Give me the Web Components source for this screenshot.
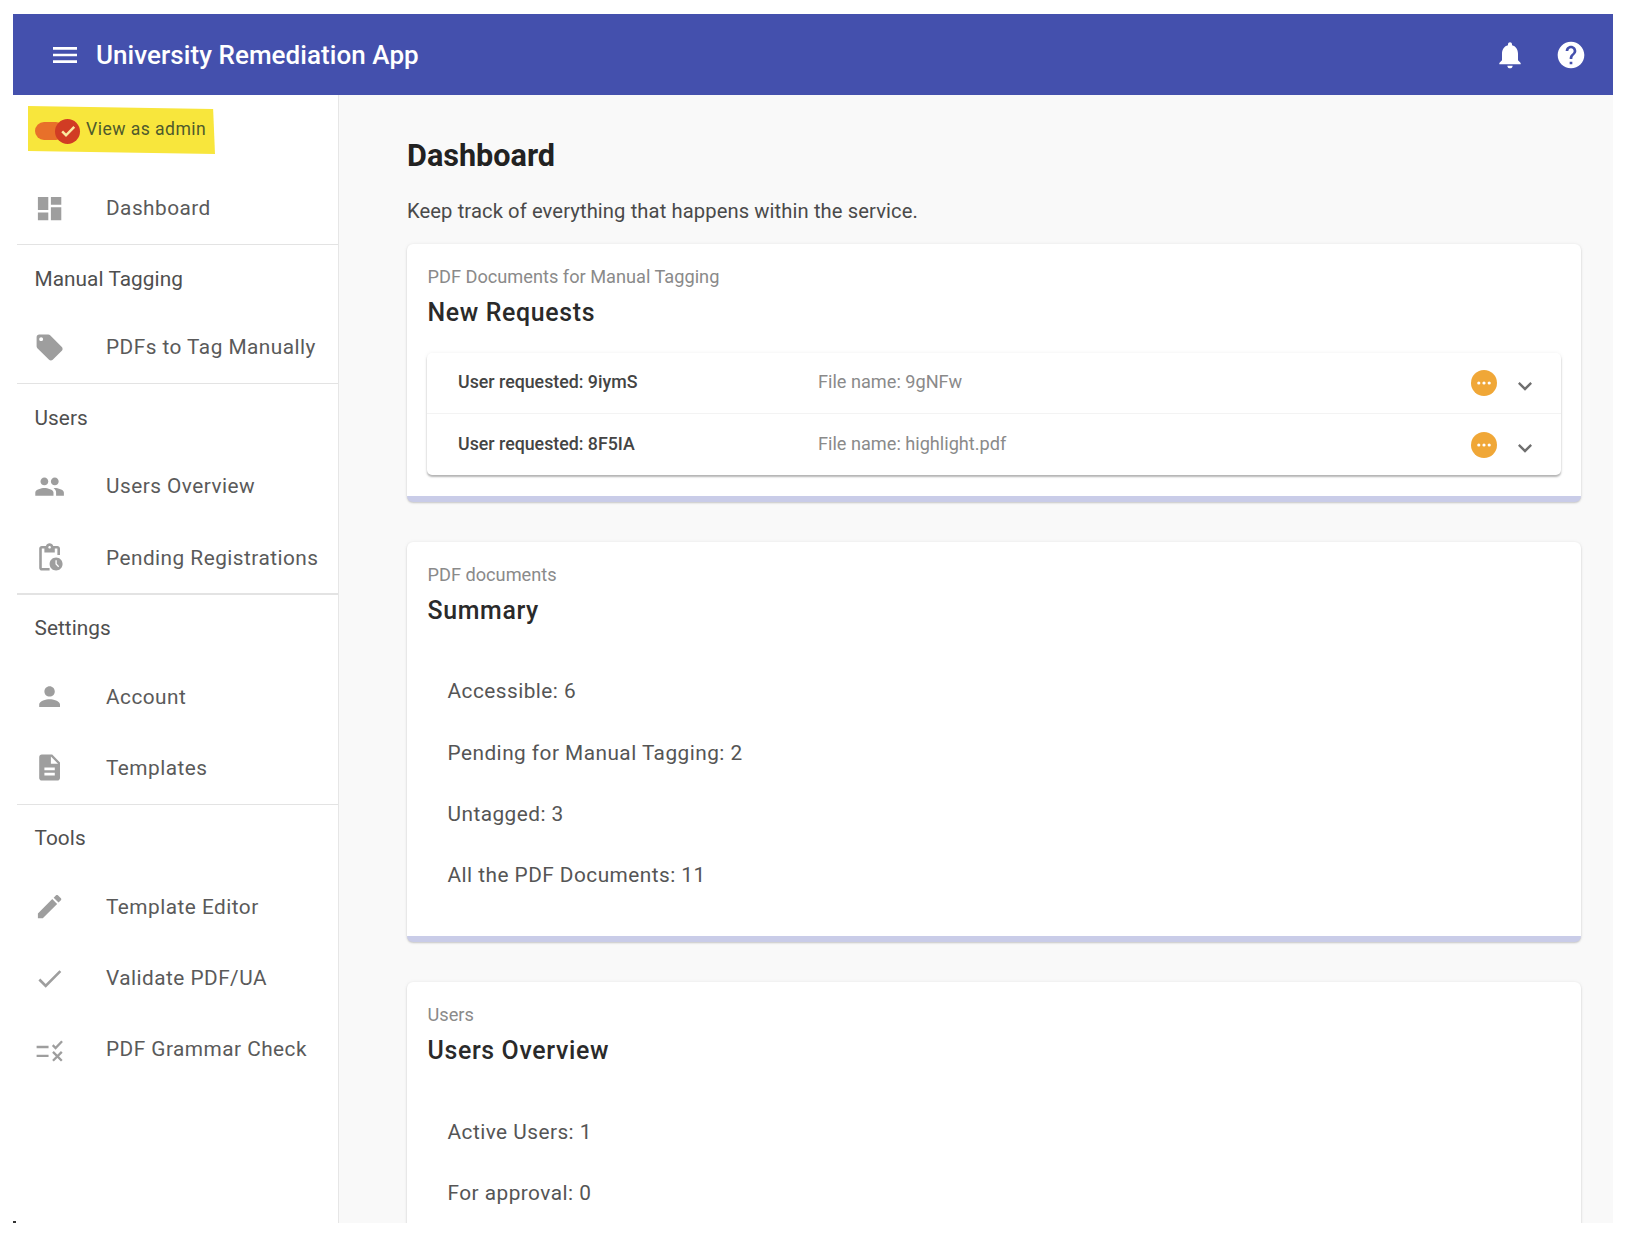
<!DOCTYPE html>
<html lang="en">
<head>
<meta charset="utf-8">
<title>University Remediation App</title>
<style>
html,body{margin:0;padding:0;background:#fff;overflow:hidden}
body{font-family:Roboto,"Liberation Sans",sans-serif;padding:14px 19px 0 13px;height:1226px}
</style>
</head>
<body>
<app-shell>
  <app-bar slot="bar">University Remediation App</app-bar>
  <side-nav slot="nav">
    <admin-toggle>View as admin</admin-toggle>
    <nav-item icon="dashboard">Dashboard</nav-item>
    <nav-divider></nav-divider>
    <nav-head>Manual Tagging</nav-head>
    <nav-item icon="tag">PDFs to Tag Manually</nav-item>
    <nav-divider></nav-divider>
    <nav-head>Users</nav-head>
    <nav-item icon="people">Users Overview</nav-item>
    <nav-item icon="pending">Pending Registrations</nav-item>
    <nav-divider></nav-divider>
    <nav-head>Settings</nav-head>
    <nav-item icon="person">Account</nav-item>
    <nav-item icon="doc">Templates</nav-item>
    <nav-divider></nav-divider>
    <nav-head>Tools</nav-head>
    <nav-item icon="edit">Template Editor</nav-item>
    <nav-item icon="check">Validate PDF/UA</nav-item>
    <nav-item icon="rule">PDF Grammar Check</nav-item>
  </side-nav>
  <dash-page slot="main" heading="Dashboard" intro="Keep track of everything that happens within the service.">
    <dash-card label="PDF Documents for Manual Tagging" heading="New Requests">
      <request-list>
        <request-row user="User requested: 9iymS" file="File name: 9gNFw"></request-row>
        <request-row user="User requested: 8F5IA" file="File name: highlight.pdf"></request-row>
      </request-list>
    </dash-card>
    <dash-card label="PDF documents" heading="Summary">
      <stat-line>Accessible: 6</stat-line>
      <stat-line>Pending for Manual Tagging: 2</stat-line>
      <stat-line>Untagged: 3</stat-line>
      <stat-line>All the PDF Documents: 11</stat-line>
    </dash-card>
    <dash-card label="Users" heading="Users Overview">
      <stat-line>Active Users: 1</stat-line>
      <stat-line>For approval: 0</stat-line>
    </dash-card>
  </dash-page>
</app-shell>
<script>
const ICONS={
  menu:'<path d="M3 18h18v-2H3v2zm0-5h18v-2H3v2zm0-7v2h18V6H3z"/>',
  bell:'<path d="M12 22c1.1 0 2-.9 2-2h-4c0 1.1.89 2 2 2zm6-6v-5c0-3.07-1.64-5.64-4.5-6.32V4c0-.83-.67-1.5-1.5-1.5s-1.5.67-1.5 1.5v.68C7.63 5.36 6 7.92 6 11v5l-2 2v1h16v-1l-2-2z"/>',
  help:'<path d="M12 2C6.48 2 2 6.48 2 12s4.48 10 10 10 10-4.48 10-10S17.52 2 12 2zm1 17h-2v-2h2v2zm2.07-7.75l-.9.92C13.45 12.9 13 13.5 13 15h-2v-.5c0-1.1.45-2.1 1.17-2.83l1.24-1.26c.37-.36.59-.86.59-1.41 0-1.1-.9-2-2-2s-2 .9-2 2H8c0-2.21 1.79-4 4-4s4 1.79 4 4c0 .88-.36 1.68-.93 2.25z"/>',
  dashboard:'<path d="M3 13h8V3H3v10zm0 8h8v-6H3v6zm10 0h8V11h-8v10zm0-18v6h8V3h-8z"/>',
  tag:'<path d="M21.41 11.58l-9-9C12.05 2.22 11.55 2 11 2H4c-1.1 0-2 .9-2 2v7c0 .55.22 1.05.59 1.42l9 9c.36.36.86.58 1.41.58.55 0 1.05-.22 1.41-.59l7-7c.37-.36.59-.86.59-1.41 0-.55-.23-1.06-.59-1.42zM5.5 7C4.67 7 4 6.33 4 5.5S4.67 4 5.5 4 7 4.67 7 5.5 6.33 7 5.5 7z"/>',
  people:'<path d="M16 11c1.66 0 2.99-1.34 2.99-3S17.66 5 16 5c-1.66 0-3 1.34-3 3s1.34 3 3 3zm-8 0c1.66 0 2.99-1.34 2.99-3S9.66 5 8 5C6.34 5 5 6.34 5 8s1.34 3 3 3zm0 2c-2.33 0-7 1.17-7 3.5V19h14v-2.5c0-2.33-4.67-3.5-7-3.5zm8 0c-.29 0-.62.02-.97.05 1.16.84 1.97 1.97 1.97 3.45V19h6v-2.5c0-2.33-4.67-3.5-7-3.5z"/>',
  pending:'<path d="M17 12c-2.76 0-5 2.24-5 5s2.24 5 5 5 5-2.24 5-5-2.24-5-5-5zm1.65 7.35L16.5 17.2V14h1v2.79l1.85 1.85-.7.71zM18 3h-3.18C14.4 1.84 13.3 1 12 1s-2.4.84-2.82 2H6c-1.1 0-2 .9-2 2v15c0 1.1.9 2 2 2h6v-2H6V5h2v3h8V5h2v5h2V5c0-1.1-.9-2-2-2zm-6 2c-.55 0-1-.45-1-1s.45-1 1-1 1 .45 1 1-.45 1-1 1z"/>',
  person:'<path d="M12 12c2.21 0 4-1.79 4-4s-1.79-4-4-4-4 1.79-4 4 1.79 4 4 4zm0 2c-2.67 0-8 1.34-8 4v2h16v-2c0-2.66-5.33-4-8-4z"/>',
  doc:'<path d="M14 2H6c-1.1 0-1.99.9-1.99 2L4 20c0 1.1.89 2 1.99 2H18c1.1 0 2-.9 2-2V8l-6-6zm2 16H8v-2h8v2zm0-4H8v-2h8v2zm-3-5V3.5L18.5 9H13z"/>',
  edit:'<path d="M3 17.25V21h3.75L17.81 9.94l-3.75-3.75L3 17.25zM20.71 7.04c.39-.39.39-1.02 0-1.41l-2.34-2.34c-.39-.39-1.02-.39-1.41 0l-1.83 1.83 3.75 3.75 1.83-1.83z"/>',
  check:'<path d="M9 16.17L4.83 12l-1.42 1.41L9 19 21 7l-1.41-1.41z"/>',
  tick:'<path d="M5 12.5l4.6 4.6L19.5 7" fill="none" stroke="currentColor" stroke-width="3"/>',
  rule:'<path d="M2 10h9.2M2 16.8h9.2M14.4 8.6l2.2 2.2 5-5.2M14.6 13.8l6.8 6.8M21.4 13.8l-6.8 6.8" fill="none" stroke="currentColor" stroke-width="1.8"/>',
  chevron:'<path d="M16.59 8.59L12 13.17 7.41 8.59 6 10l6 6 6-6z"/>'
};
function def(name,css,html,init){
  customElements.define(name,class extends HTMLElement{
    constructor(){super();this.attachShadow({mode:'open'});}
    connectedCallback(){
      const get=k=>this.getAttribute(k)||'';
      this.shadowRoot.innerHTML='<style>'+css+'</style>'+(typeof html==='function'?html(get):html);
      if(init)init(this);
    }
  });
}
const svg=(n,s)=>`<svg width="${s}" height="${s}" viewBox="0 0 24 24" fill="currentColor" aria-hidden="true">${ICONS[n]}</svg>`;

def('app-shell',
 `:host{display:flex;flex-direction:column;height:1209px;overflow:hidden;position:relative}
  .row{flex:1;display:flex;min-height:0}
  .mark{position:absolute;left:0;bottom:0;width:3px;height:2px;background:#333}`,
 `<slot name="bar"></slot><div class="row"><slot name="nav"></slot><slot name="main"></slot></div><div class="mark"></div>`);

def('app-bar',
 `:host{display:flex;align-items:center;height:81px;background:#4450ad;color:#fff;flex:none;box-sizing:border-box;padding:0 0 0 36px}
  svg{display:block;flex:none}
  .t{font:500 26px/34px Roboto,sans-serif;letter-spacing:.06px;margin-left:15px;flex:1}
  .a{margin-right:29px}.b{margin-right:26px}`,
 ()=>`${svg('menu',32)}<div class="t"><slot></slot></div><span class="a">${svg('bell',32)}</span><span class="b">${svg('help',32)}</span>`);

def('side-nav',
 `:host{display:block;width:326px;flex:none;background:#fff;border-right:1.5px solid #e6e6e6;box-sizing:border-box}`,
 `<slot></slot>`);

def('admin-toggle',
 `:host{display:block;height:77.7px;box-sizing:border-box;padding:11px 0 0 15px}
  .mark{display:flex;align-items:center;width:187px;height:48px;background:#f8e63c;clip-path:polygon(0 0,99% 6%,100% 100%,0 94%);box-sizing:border-box;padding-left:7px}
  .track{position:relative;width:30px;height:18px;border-radius:9px;background:#e8702a;flex:none;margin-top:2px}
  .thumb{position:absolute;left:20px;top:-3.5px;width:25px;height:25px;border-radius:50%;background:#d13c24;display:flex;align-items:center;justify-content:center;color:#fbe9a0}
  .l{margin-left:21px;margin-bottom:2px;font:400 17.6px/24px Roboto,sans-serif;letter-spacing:.45px;color:#4e5a2c}
  svg{display:block}`,
 ()=>`<div class="mark"><div class="track"><div class="thumb">${svg('tick',20)}</div></div><div class="l"><slot></slot></div></div>`);

def('nav-item',
 `:host{display:flex;align-items:center;height:71.3px;padding-left:21px;color:#5a5a5a}
  svg{display:block;flex:none;color:#9e9e9e}
  .l{margin-left:40.8px;font:400 20.8px/28px Roboto,sans-serif;letter-spacing:.47px;white-space:nowrap}`,
 g=>`${svg(g('icon'),31.2)}<div class="l"><slot></slot></div>`);

def('nav-head',
 `:host{display:flex;align-items:center;height:66.2px;padding-left:21.5px;font:400 20.8px/28px Roboto,sans-serif;letter-spacing:.05px;color:#4f4f4f}`,
 `<slot></slot>`);

def('nav-divider',`:host{display:block;height:1.5px;margin-left:4px;background:#e3e3e3}`,``);

def('dash-page',
 `:host{display:block;flex:1;min-width:0;background:#f9f9f9;box-sizing:border-box;padding:40.5px 32px 0 68px;overflow:hidden}
  h1{margin:0;font:700 30.6px/40px Roboto,sans-serif;color:#222}
  p{margin:20.5px 0 18px;font:400 20.2px/30px Roboto,sans-serif;color:#4a4a4a;letter-spacing:.1px}
  .c{display:flex;flex-direction:column;gap:40px}`,
 g=>`<h1>${g('heading')}</h1><p>${g('intro')}</p><div class="c"><slot></slot></div>`);

def('dash-card',
 `:host{display:block;background:#fff;border-radius:6px;border-bottom:6px solid #c9cce8;box-shadow:0 0 4px rgba(0,0,0,.05),0 1px 2px rgba(0,0,0,.18);padding:20px 20px 21px;box-sizing:border-box}
  .k{font:400 18.2px/26px Roboto,sans-serif;color:#8a8a8a;padding-left:.5px}
  .h{margin-top:5px;padding-left:.5px;font:500 24.9px/36px Roboto,sans-serif;color:#2a2a2a;letter-spacing:.65px}
  .b{margin-top:22px}`,
 g=>`<div class="k">${g('label')}</div><div class="h">${g('heading')}</div><div class="b"><slot></slot></div>`);

def('request-list',
 `:host{display:block;background:#fff;border-radius:5px;box-shadow:0 0 4px rgba(0,0,0,.06),0 2px 2px rgba(0,0,0,.28)}
  ::slotted(request-row:first-child){border-bottom:1.5px solid #f3f3f3}`,
 `<slot></slot>`);

def('request-row',
 `:host{display:flex;align-items:center;height:61px;box-sizing:border-box;padding:0 0 1.5px 31px;position:relative}
  .u{width:360px;flex:none;font:500 17.8px/24px Roboto,sans-serif;color:#444}
  .f{flex:1;font:400 18.15px/24px Roboto,sans-serif;color:#8a8a8a}
  .s{display:block;flex:none;margin-top:2px}
  .c{display:block;flex:none;color:#6f6f6f;margin:12px 22px 0 14px}`,
 g=>`<div class="u">${g('user')}</div><div class="f">${g('file')}</div>
  <svg class="s" width="26" height="26" viewBox="0 0 26 26"><circle cx="13" cy="13" r="13" fill="#f0a737"/><circle cx="7.8" cy="13" r="1.6" fill="#fff"/><circle cx="13" cy="13" r="1.6" fill="#fff"/><circle cx="18.2" cy="13" r="1.6" fill="#fff"/></svg>
  <span class="c">${svg('chevron',28)}</span>`);

def('stat-line',
 `:host{display:flex;align-items:center;height:61.4px;padding-left:20.5px;font:400 20.8px/28px Roboto,sans-serif;letter-spacing:.47px;color:#555}
  :host(:first-child){margin-top:31.5px}
  :host(:last-child){margin-bottom:9.4px}`,
 `<slot></slot>`);
</script>
</body>
</html>
